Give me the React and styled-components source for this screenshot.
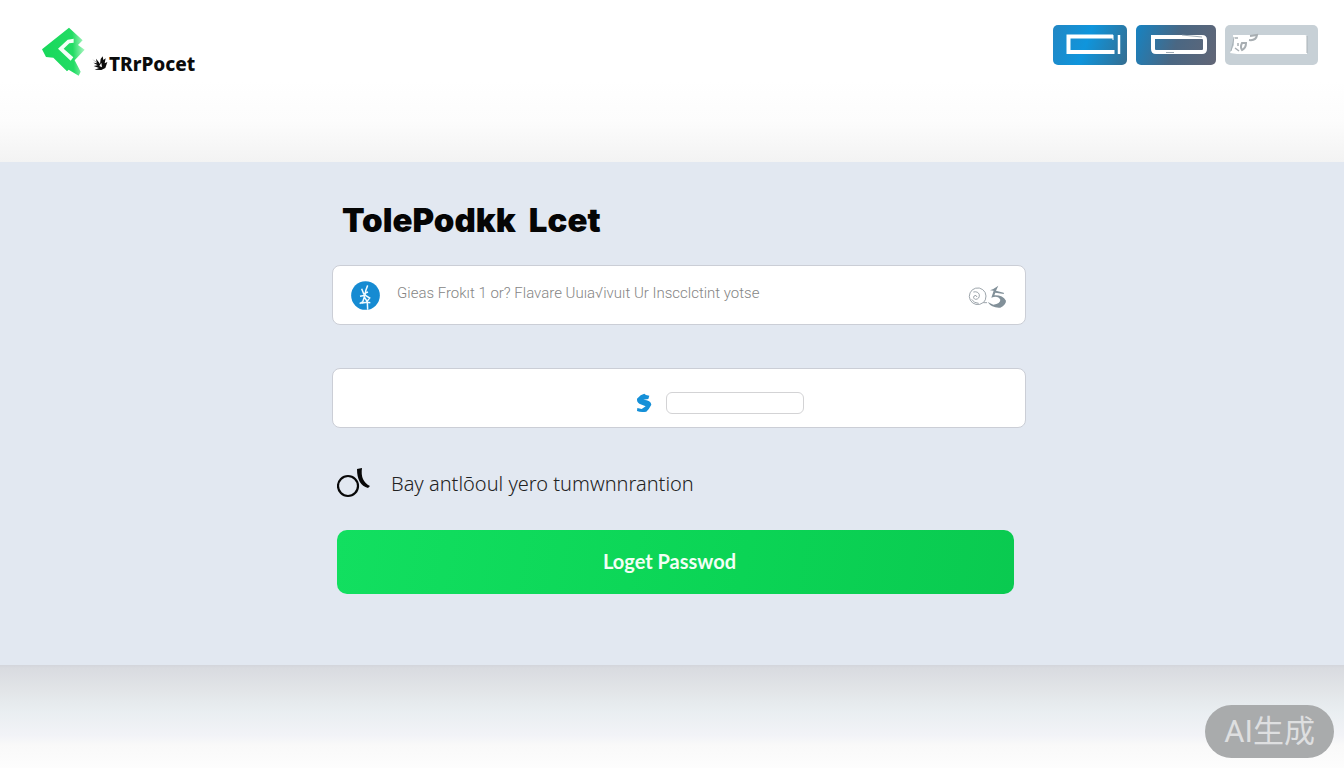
import React from 'react'
import styled, { createGlobalStyle } from 'styled-components'

const GlobalStyle = createGlobalStyle`
  * {
    box-sizing: border-box;
  }

  body {
    margin: 0;
    background: #fff;
    font-family: Inter, 'Liberation Sans', sans-serif;
  }
`

const Page = styled.div`
  display: flex;
  flex-direction: column;
  min-height: 100vh;
`

const Header = styled.header`
  display: flex;
  justify-content: space-between;
  align-items: flex-start;
  min-height: 162px;
  padding: 25px 26px 0 42px;
  background: linear-gradient(#fff 50%, #fcfcfc 75%, #f3f3f3 100%);
`

const Brand = styled.a`
  display: flex;
  align-items: flex-end;
  padding-top: 2px;
  color: #0b0b0b;
  text-decoration: none;
`

const BrandName = styled.span`
  display: flex;
  align-items: center;
  gap: 1px;
  margin-left: 6px;
  font-family: 'Noto Sans', sans-serif;
  font-size: 19px;
  font-weight: 800;
  line-height: 26px;
`

const Actions = styled.nav`
  display: flex;
  gap: 9px;
`

const ActionButton = styled.button`
  width: ${props => props.$width}px;
  height: 40px;
  padding: 0;
  border: 0;
  border-radius: 5px;
  background: ${props => props.$background};
  cursor: pointer;

  svg {
    display: block;
  }
`

const Panel = styled.main`
  padding: 38px 24px 71px 38px;
  background: #e2e8f1;
`

const Form = styled.form`
  display: flex;
  flex-direction: column;
  max-width: 694px;
  margin: 0 auto;
`

const Title = styled.h1`
  margin: 0 0 25px;
  padding: 0 10px;
  color: #050505;
  font-size: 33px;
  font-weight: 900;
  line-height: 40px;
  white-space: pre-wrap;
`

const Field = styled.div`
  display: flex;
  align-items: center;
  justify-content: ${props => (props.$centered ? 'center' : 'flex-start')};
  gap: ${props => (props.$centered ? 14 : 17)}px;
  height: 60px;
  padding: ${props => (props.$centered ? '10px 0 0 82px' : '0 18px')};
  border: 1px solid #cbced6;
  border-radius: 8px;
  background: #fff;
`

const AccountInput = styled.input`
  flex: 1;
  min-width: 0;
  height: 40px;
  padding: 0 0 4px;
  border: 0;
  outline: 0;
  background: transparent;
  font-family: Roboto, sans-serif;
  font-size: 15px;
  font-weight: 300;

  &::placeholder {
    color: #858585;
    opacity: 1;
  }
`

const AmountInput = styled.input`
  width: 138px;
  height: 22px;
  padding: 0 8px;
  border: 1px solid #d3d3d5;
  border-radius: 6px;
  background: #fff;
`

const Note = styled.p`
  display: flex;
  align-items: center;
  gap: 20px;
  height: 30px;
  margin: 40px 0 32px;
  padding: 0 5px;
  color: #222;
  font-family: 'Noto Sans', sans-serif;
  font-size: 20px;
  font-weight: 300;
`

const SubmitButton = styled.button`
  height: 64px;
  margin: 0 12px 0 5px;
  padding: 0 12px 2px 0;
  border: 0;
  border-radius: 10px;
  background: linear-gradient(100deg, #12df60, #0bd455 60%, #0aca50);
  color: #f2fff5;
  font-family: Lato, sans-serif;
  font-size: 20px;
  font-weight: 700;
  cursor: pointer;
`

const Gap = styled.div`
  height: 43px;
`

const Footer = styled.footer`
  flex: 1;
  min-height: 103px;
  background: linear-gradient(#d3d5db, #d9dbe0 3%, #e2e5e8 25%, #e9eef1 45%, #f2f3f7 68%, #f9f9f9 78%, #fdfdfd);
`

const Badge = styled.span`
  position: fixed;
  right: 10px;
  bottom: 10px;
  padding: 0 19px;
  border-radius: 27px;
  background: #a9abac;
  color: #dedfe0;
  font-family: Roboto, 'Noto Sans CJK SC', sans-serif;
  font-size: 31px;
  line-height: 53px;
`

const LogoMark = () => (
  <svg width="44" height="50" viewBox="36 36 132 150" aria-hidden="true">
    <defs>
      <linearGradient id="mark" gradientUnits="userSpaceOnUse" x1="40" y1="100" x2="166" y2="94">
        <stop offset="0" stopColor="#18d85b" />
        <stop offset="0.7" stopColor="#22dc64" />
        <stop offset="1" stopColor="#b5f8c8" />
      </linearGradient>
    </defs>
    <path
      d="M117 38 158 76 144 90 164 104 134 136 152 170 146 182 116 164 111 169 70 128 48 126 36 103Z"
      fill="url(#mark)"
    />
    <path d="M131 71 113 74 84 101 122 137 130 127 101 101 118 85 131 83Z" fill="#f4fff7" />
  </svg>
)

const LeafMark = () => (
  <svg width="16" height="16" viewBox="0 0 48 48" fill="#0b0b0b" aria-hidden="true">
    <path d="M1 10 14 19 12 8 20 18 24 24 26 9 32 1 34 12 41 7 38 22 46 18 40 36 28 42 8 41 21 36 5 30 17 28 4 20 16 22Z" />
    <path d="M22 30 28 20 30 34Z" fill="#fff" />
  </svg>
)

const CardIcon = () => (
  <svg width="74" height="40" viewBox="0 0 74 40" fill="none" stroke="#fff" aria-hidden="true">
    <path d="M60 11.500H15.500V27H61" strokeWidth="4" />
    <path d="M60 10V15M61 25V29" strokeWidth="1" />
    <path d="M66 10V29" strokeWidth="2.500" />
  </svg>
)

const SlotIcon = () => (
  <svg width="80" height="40" viewBox="0 0 80 40" fill="none" stroke="#fff" aria-hidden="true">
    <path d="M17 12H66Q69 12 69 15V24Q69 27 66 27H20Q17 27 17 24Z" strokeWidth="4" />
    <path d="M46 10 66 12M30 27.500H38" stroke="#8795a3" strokeWidth="0.8" />
  </svg>
)

const TagIcon = () => (
  <svg width="93" height="40" viewBox="0 0 93 40" fill="none" aria-hidden="true">
    <path d="M8 10H80Q82 10 82 12V29H12L5 28 9 20Z" fill="#fff" />
    <path d="M9 12 8 18 6 26M82 11V28" stroke="#a8b0b5" />
    <path d="M17 18Q15 22 17 25 21 23 21 18ZM24 15Q31 16 32 10L25 11" stroke="#a8aeb2" strokeWidth="2" />
    <path d="M10 13H13M10 23 14 26M13 18V21" stroke="#a8aeb2" strokeWidth="1.500" />
  </svg>
)

const AccountIcon = () => (
  <svg width="29" height="29" viewBox="0 0 87 87" fill="none" aria-hidden="true">
    <circle cx="43.500" cy="43.500" r="43" fill="#168bd2" />
    <path
      d="M50 13Q43 28 42 43M32 23 38 38 51 33M27 46 43 43 56 51 46 64 34 66 40 48 50 64 58 65M26 68 33 63M49 63 50 86"
      stroke="#effaff"
      strokeWidth="4.500"
    />
  </svg>
)

const CodeIcon = () => (
  <svg width="40" height="32" viewBox="51 74 120 96" fill="none" aria-hidden="true">
    <path d="M99 145A25 25 0 1 1 108 125Q108 138 100 145L111 145" stroke="#89939a" strokeWidth="2.500" />
    <path d="M70 113Q84 110 88 121 89 134 77 135 68 133 72 125 79 120 81 128M65 135Q72 147 86 147" stroke="#89939a" strokeWidth="2.500" />
    <path d="M145 94 130 104 120 108 131 109 124 130Q144 122 151 136 151 148 130 151L113 143Q126 162 151 160 168 151 168 139 158 122 133 123L136 115 162 119 161 115 138 109Z" fill="#829099" />
  </svg>
)

const CurrencyIcon = () => (
  <svg width="16" height="20" viewBox="48 102 48 60" aria-hidden="true">
    <path
      d="M73 104 78 108 88 110 85 120 70 122Q93 124 94 137 88 149 79 158 62 161 51 156L52 147 65 150 77 142 58 134Q50 129 51 119L62 109Z"
      fill="#1590d8"
    />
  </svg>
)

const NoteIcon = () => (
  <svg width="34" height="30" viewBox="0 0 34 30" fill="none" aria-hidden="true">
    <circle cx="11" cy="18" r="10" stroke="#080808" strokeWidth="2.200" />
    <path d="M20 1 25 0Q23 13 33 18L31 20Q20 17 20 1Z" fill="#080808" />
  </svg>
)

export default () => (
  <Page>
    <GlobalStyle />
    <Header>
      <Brand href="#">
        <LogoMark />
        <BrandName>
          <LeafMark />
          TRrPocet
        </BrandName>
      </Brand>
      <Actions>
        <ActionButton
          type="button"
          aria-label="Card"
          $width={74}
          $background="linear-gradient(110deg, #2287c4, #0f95dc 45%, #356d90)"
        >
          <CardIcon />
        </ActionButton>
        <ActionButton
          type="button"
          aria-label="Slot"
          $width={80}
          $background="linear-gradient(110deg, #1683c2, #4a6783 50%, #626676)"
        >
          <SlotIcon />
        </ActionButton>
        <ActionButton type="button" aria-label="Tag" $width={93} $background="#c7d0d6">
          <TagIcon />
        </ActionButton>
      </Actions>
    </Header>
    <Panel>
      <Form onSubmit={e => e.preventDefault()}>
        <Title>{'TolePodkk  Lcet'}</Title>
        <Field>
          <AccountIcon />
          <AccountInput
            type="text"
            aria-label="Account"
            placeholder="Gieas Frokıt 1 or? Flavare Uuıa√ivuıt Ur Inscclctint yotse"
          />
          <CodeIcon />
        </Field>
        <Gap />
        <Field $centered>
          <CurrencyIcon />
          <AmountInput type="text" aria-label="Amount" />
        </Field>
        <Note>
          <NoteIcon />
          <span>Bay antlōoul yero tumwnnrantion</span>
        </Note>
        <SubmitButton type="submit">Loget Passwod</SubmitButton>
      </Form>
    </Panel>
    <Footer />
    <Badge>AI生成</Badge>
  </Page>
)
